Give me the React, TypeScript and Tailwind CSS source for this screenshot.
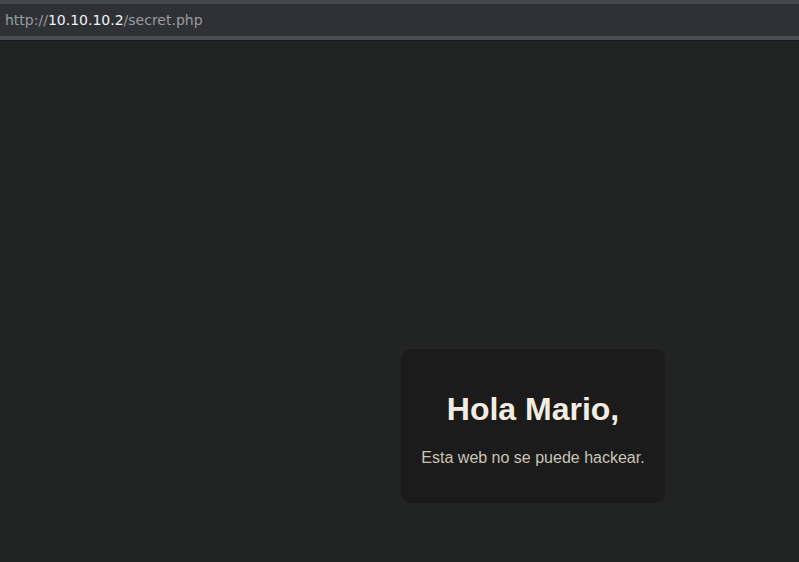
export default function App() {
  return (
    <div className="w-[799px] h-[562px] overflow-hidden bg-[#222423] flex flex-col">
      <div className="h-[4px] bg-[#45494e]"></div>
      <div className="h-[32px] bg-[#2f3136] flex items-center px-[5px] font-['DejaVu_Sans',sans-serif] text-[14px]">
        <span className="text-[#9a9ca0]">http://</span>
        <span className="text-[#f2f2f2]">10.10.10.2</span>
        <span className="text-[#9a9ca0]">/secret.php</span>
      </div>
      <div className="h-[4px] bg-[#4a4d55]"></div>
      <div className="h-[1px] bg-[#1a1c1c]"></div>
      <div className="flex-1 pl-[401px] pt-[308px]">
        <div className="w-[264px] h-[154px] rounded-[10px] bg-[#1b1b1b] flex flex-col items-center pt-[44px] font-['Liberation_Sans',Arial,sans-serif]">
          <h1 className="text-[32px] font-bold text-[#f3ece0] leading-none">Hola Mario,</h1>
          <p className="text-[16px] text-[#cbc3b6] mt-[25px] leading-none">Esta web no se puede hackear.</p>
        </div>
      </div>
    </div>
  );
}
